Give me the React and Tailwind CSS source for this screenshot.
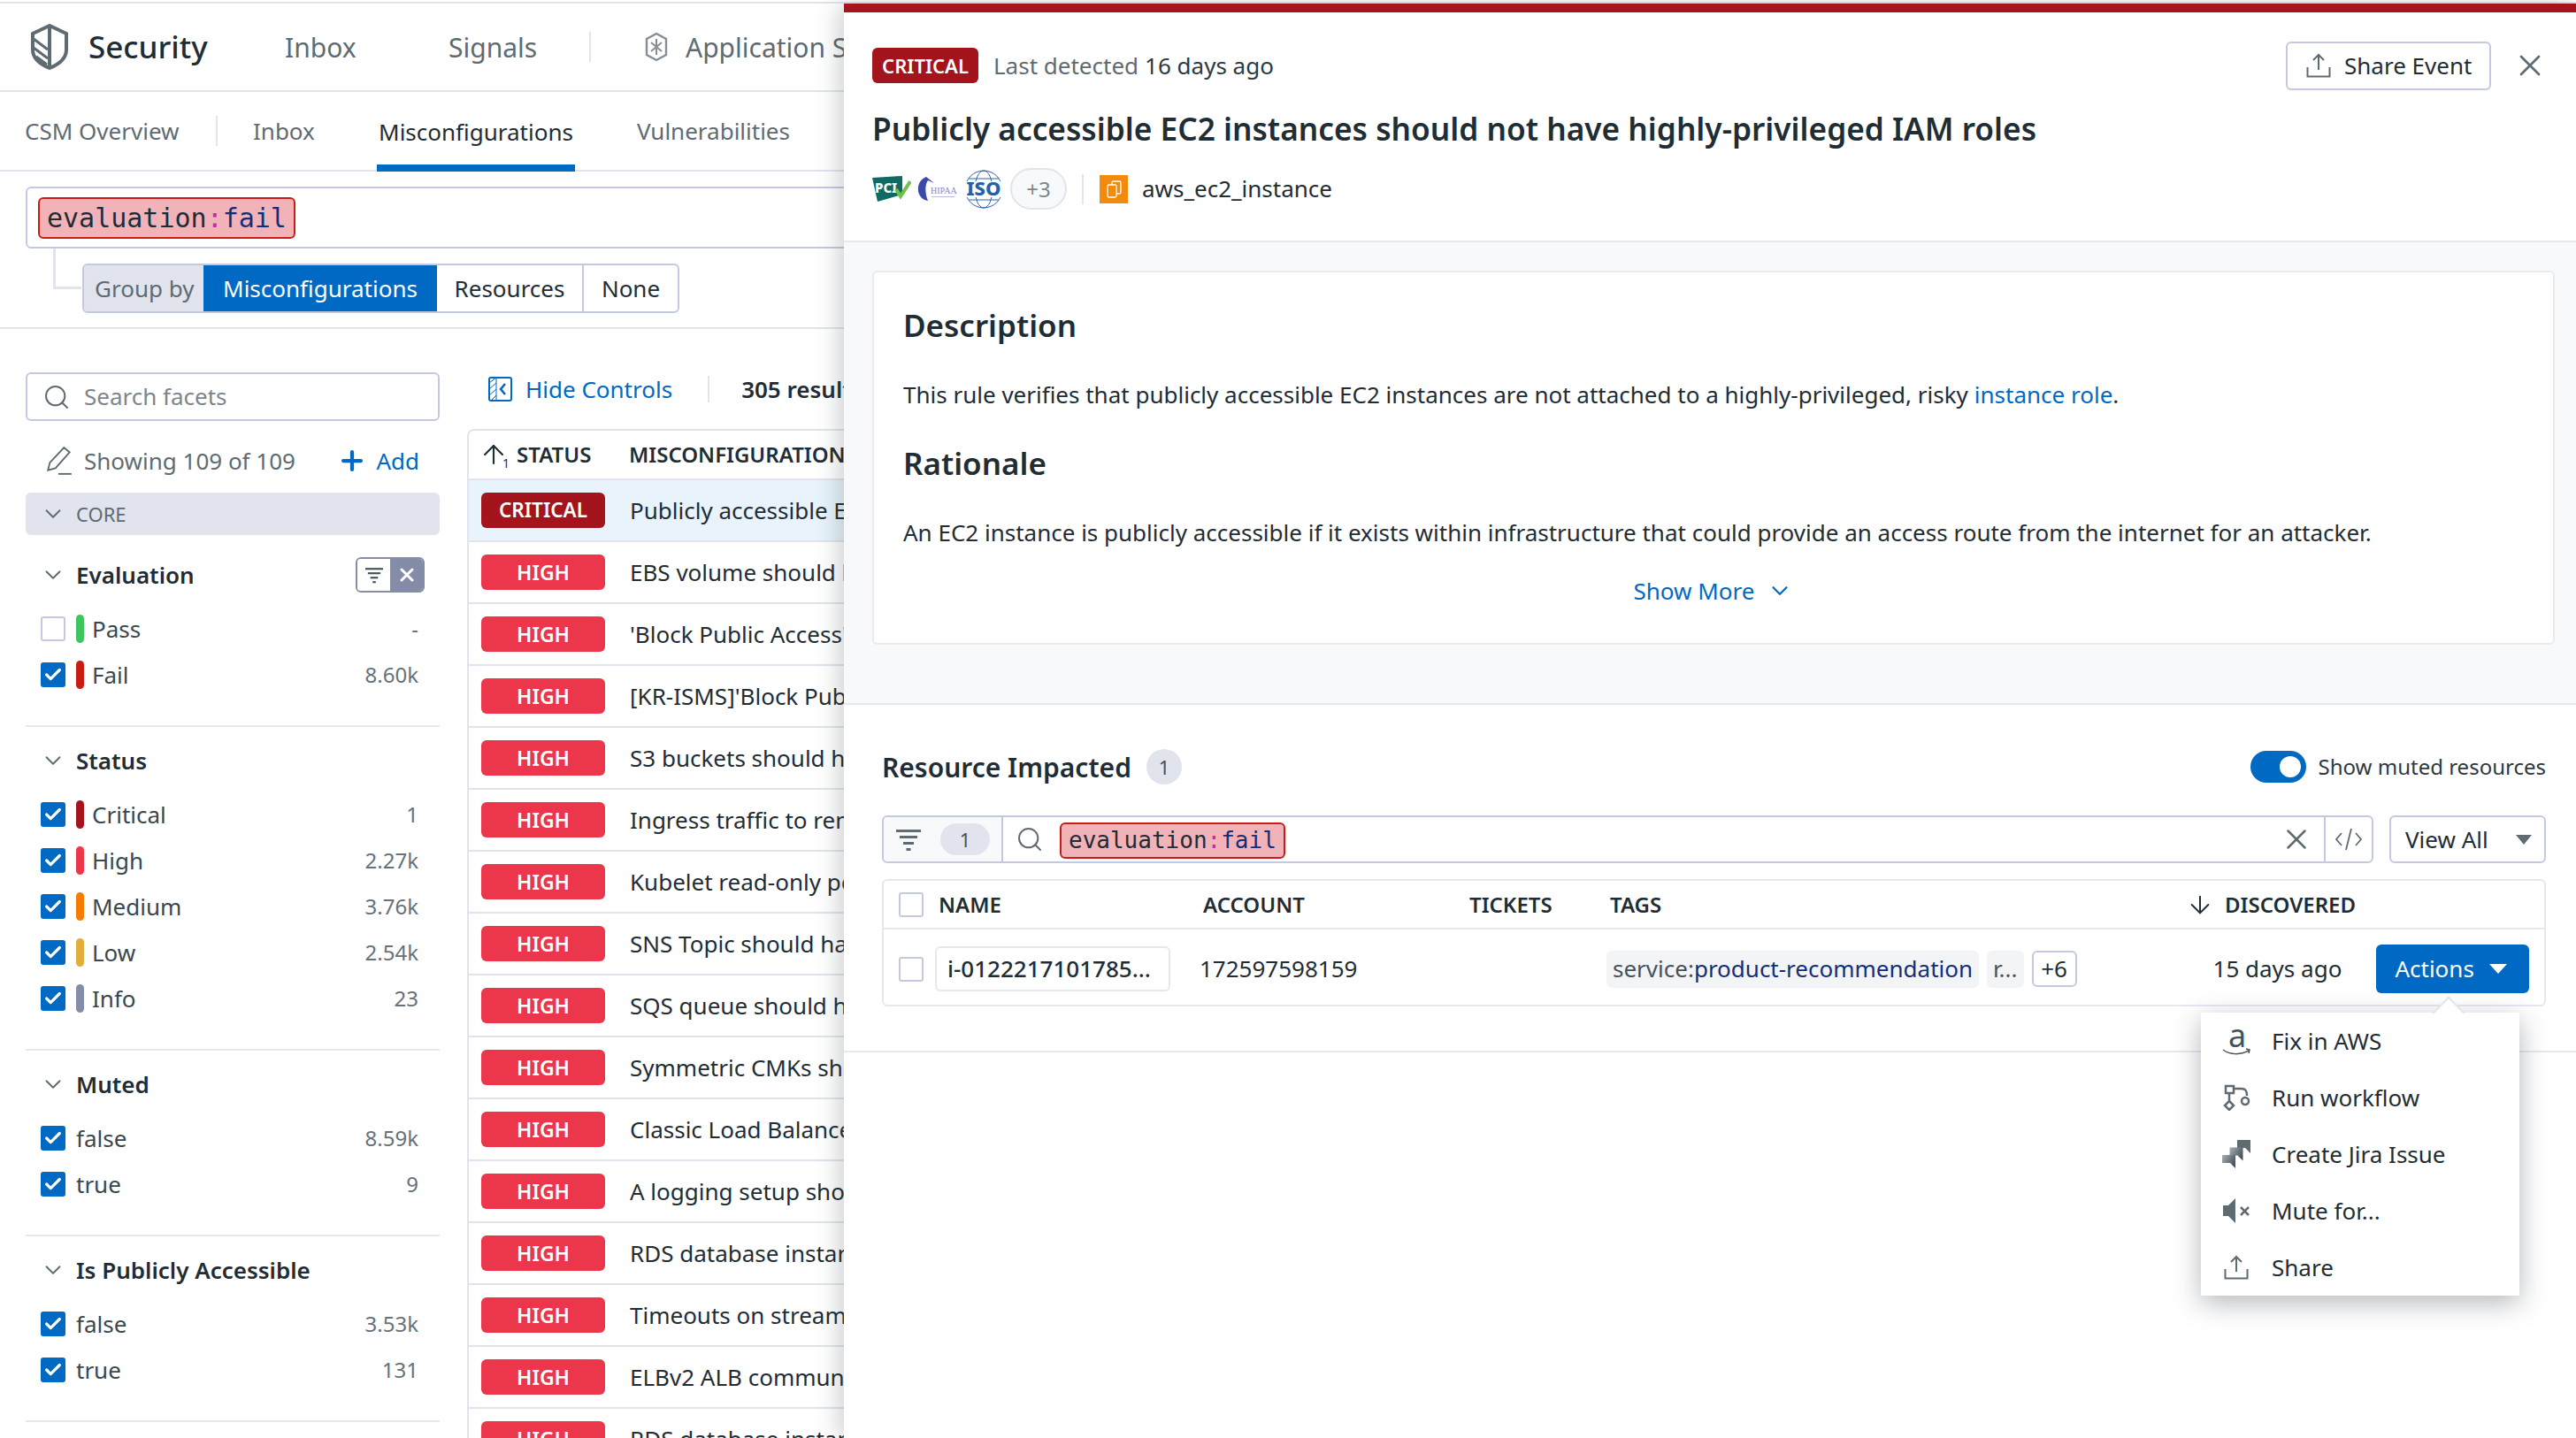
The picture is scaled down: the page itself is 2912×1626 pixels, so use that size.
import { Search, ChevronDown, Plus, X, Check, ArrowUp, ArrowDown } from "lucide-react";

const rows = [
  "EBS volume should be encrypted",
  "'Block Public Access' should be enabled",
  "[KR-ISMS]'Block Public Access' should be enabled",
  "S3 buckets should have logging enabled",
  "Ingress traffic to remote ports should be restricted",
  "Kubelet read-only port should be disabled",
  "SNS Topic should have encryption enabled",
  "SQS queue should have encryption enabled",
  "Symmetric CMKs should have rotation enabled",
  "Classic Load Balancer should use TLS",
  "A logging setup should be configured",
  "RDS database instance should be encrypted",
  "Timeouts on stream should be configured",
  "ELBv2 ALB communication should use HTTPS",
  "RDS database instance should not be public",
];

const facets = [
  {
    title: "Evaluation",
    first: true,
    clear: true,
    items: [
      { label: "Pass", count: "-", dot: "bg-[#3fc462]", off: true },
      { label: "Fail", count: "8.60k", dot: "bg-[#c91c12]" },
    ],
  },
  {
    title: "Status",
    items: [
      { label: "Critical", count: "1", dot: "bg-[#a3141c]" },
      { label: "High", count: "2.27k", dot: "bg-[#eb364b]" },
      { label: "Medium", count: "3.76k", dot: "bg-[#f57c00]" },
      { label: "Low", count: "2.54k", dot: "bg-[#e0ae3d]" },
      { label: "Info", count: "23", dot: "bg-[#858ca8]" },
    ],
  },
  {
    title: "Muted",
    items: [
      { label: "false", count: "8.59k" },
      { label: "true", count: "9" },
    ],
  },
  {
    title: "Is Publicly Accessible",
    items: [
      { label: "false", count: "3.53k" },
      { label: "true", count: "131" },
    ],
  },
];

// little filter funnel made of shrinking bars
const FilterBars = ({ className }) => (
  <svg viewBox="0 0 28 28" className={className} fill="currentColor">
    <rect x="0" y="3" width="28" height="3" />
    <rect x="4" y="10" width="20" height="3" />
    <rect x="8" y="17" width="12" height="3" />
    <rect x="11.5" y="24" width="5" height="3" />
  </svg>
);

const ShareIcon = ({ className }) => (
  <svg viewBox="0 0 28 28" className={className} fill="none" stroke="currentColor" strokeWidth="2">
    <path d="M14 19V2M8 8l6-6 6 6" />
    <path d="M1.5 16v10.5h25V16" />
  </svg>
);

const CheckBox = ({ off }) =>
  off ? (
    <span className="w-[28px] h-[28px] shrink-0 rounded-[3px] border-2 border-[#c3cadf] bg-white" />
  ) : (
    <span className="w-[28px] h-[28px] shrink-0 rounded-[3px] bg-[#0069c4] flex items-center justify-center">
      <Check size={22} strokeWidth={3.5} className="text-white" />
    </span>
  );

const FailPill = ({ small }) => (
  <span
    className={`inline-flex items-center rounded-[6px] border-2 border-[#c91c12] bg-[#f2b3b8] font-['DejaVu_Sans_Mono',monospace] ${
      small ? "h-[41px] px-[8px] text-[26px]" : "h-[47px] px-[8px] text-[30px]"
    }`}
  >
    <span className="text-[#1e2c33]">evaluation</span>
    <span className="text-[#c727b0]">:</span>
    <span className="text-[#12307a]">fail</span>
  </span>
);

const Facet = ({ facet }) => (
  <div className={`border-b-2 border-[#e6e8f0] pb-[31px] ${facet.first ? "pt-[25px]" : "pt-[18px]"}`}>
    <div className="h-[40px] flex items-center pl-[16px] pr-[17px]">
      <ChevronDown size={30} strokeWidth={1.5} className="text-[#5f6b73] mr-[11px]" />
      <span className="text-[26px] font-semibold text-[#1f2d35]">{facet.title}</span>
      {facet.clear && (
        <span className="ml-auto flex h-[40px] w-[78px] rounded-[6px] border-2 border-[#858ca8] overflow-hidden">
          <span className="w-[37px] flex items-center justify-center bg-white text-[#46525a]">
            <FilterBars className="w-[20px] h-[20px]" />
          </span>
          <span className="flex-1 flex items-center justify-center bg-[#858ca8]">
            <X size={24} strokeWidth={3} className="text-white" />
          </span>
        </span>
      )}
    </div>
    <div className="mt-[15px]">
      {facet.items.map((item) => (
        <div key={item.label} className="h-[52px] flex items-center pl-[17px] pr-[24px]">
          <CheckBox off={item.off} />
          {item.dot ? (
            <>
              <span className={`w-[9px] h-[32px] rounded-full ml-[12px] mr-[9px] ${item.dot}`} />
              <span className="text-[26px] text-[#3a474f]">{item.label}</span>
            </>
          ) : (
            <span className="text-[26px] text-[#3a474f] ml-[12px]">{item.label}</span>
          )}
          <span className="ml-auto text-[24px] text-[#67717a]">{item.count}</span>
        </div>
      ))}
    </div>
  </div>
);

const Sidebar = () => (
  <div className="w-[468px] ml-[29px] shrink-0">
    <div className="mt-[49px] h-[55px] rounded-[6px] border-2 border-[#c3cadf] flex items-center pl-[17px]">
      <Search size={32} strokeWidth={1.5} className="text-[#5f6b73]" />
      <span className="ml-[15px] text-[26px] text-[#7d868d]">Search facets</span>
    </div>
    <div className="mt-[25px] h-[40px] flex items-center pl-[22px] pr-[23px]">
      <svg viewBox="0 0 30 32" className="w-[34px] h-[34px] -ml-[1px] text-[#5f6b73]" fill="none" stroke="currentColor" strokeWidth="1.8">
        <path d="M3 26L5 18 20 2l6 5-15 17z" />
        <path d="M14 30h14" />
      </svg>
      <span className="ml-[11px] text-[26px] text-[#5f6b73]">Showing 109 of 109</span>
      <span className="ml-auto flex items-center text-[26px] text-[#0069c4]">
        <Plus size={34} strokeWidth={3} />
        <span className="ml-[10px]">Add</span>
      </span>
    </div>
    <div className="mt-[16px] h-[48px] rounded-[6px] bg-[#e1e4ec] flex items-center pl-[16px]">
      <ChevronDown size={30} strokeWidth={1.5} className="text-[#5f6b73] mr-[11px]" />
      <span className="text-[22px] text-[#5f6b73]">CORE</span>
    </div>
    {facets.map((facet) => (
      <Facet key={facet.title} facet={facet} />
    ))}
  </div>
);

const ResultsTable = () => (
  <div className="ml-[31px] flex-1 min-w-0 overflow-hidden">
    <div className="mt-[48px] h-[40px] flex items-center pl-[24px] whitespace-nowrap">
      <svg viewBox="0 0 27 28" className="w-[27px] h-[28px] text-[#0069c4]" fill="none" stroke="currentColor" strokeWidth="2">
        <rect x="1" y="1" width="25" height="26" rx="2" />
        <path d="M9 1v26M1 7l8-6M1 14l8-7M1 21l8-7M3 27l6-6" strokeWidth="1" />
        <path d="M19 8l-5 6 5 6" strokeWidth="2.5" />
      </svg>
      <span className="ml-[15px] text-[26px] text-[#0069c4]">Hide Controls</span>
      <span className="ml-[40px] w-[2px] h-[30px] bg-[#e1e4ec]" />
      <span className="ml-[36px] text-[26px] font-semibold text-[#1f2d35]">305 results found</span>
    </div>
    <div className="mt-[25px] border-l-2 border-t-2 border-[#e1e4ec] rounded-tl-[8px]">
      <div className="h-[56px] flex items-center border-b-2 border-[#e1e4ec] text-[24px] font-semibold text-[#1f2d35] whitespace-nowrap">
        <span className="relative w-[54px] pl-[14px] flex items-center">
          <ArrowUp size={34} strokeWidth={1.5} className="text-[#1f2d35] -ml-[3px]" />
          <span className="absolute left-[38px] top-[16px] text-[14px] font-normal">1</span>
        </span>
        <span className="w-[127px]">STATUS</span>
        <span>MISCONFIGURATION</span>
      </div>
      <div className="h-[70px] flex items-center pl-[14px] bg-[#e8f3fb] border-b-2 border-[#e1e4ec] whitespace-nowrap">
        <span className="w-[140px] h-[40px] rounded-[6px] bg-[#a3141c] text-white text-[22.5px] font-semibold flex items-center justify-center">
          CRITICAL
        </span>
        <span className="ml-[28px] text-[26px] text-[#1f2d35]">Publicly accessible EC2 instances</span>
      </div>
      {rows.map((title, i) => (
        <div key={i} className="h-[70px] flex items-center pl-[14px] border-b-2 border-[#e1e4ec] whitespace-nowrap">
          <span className="w-[140px] h-[40px] rounded-[6px] bg-[#eb364b] text-white text-[23px] font-semibold flex items-center justify-center">
            HIGH
          </span>
          <span className="ml-[28px] text-[26px] text-[#1f2d35]">{title}</span>
        </div>
      ))}
    </div>
  </div>
);

const ActionsMenu = () => (
  <div className="absolute left-[1534px] top-[1131px] w-[360px] h-[320px] bg-white shadow-[0_8px_28px_rgba(40,50,60,0.35)] flex flex-col text-[26px] text-[#1f2d35]">
    <span className="absolute -top-[13px] left-[267px] w-[26px] h-[26px] rotate-45 bg-white border-l-2 border-t-2 border-[#e1e4ec]" />
    <div className="relative h-[64px] flex items-center pl-[24px]">
      <span className="relative w-[32px] h-[32px] shrink-0 text-[#46525a]">
        <span className="absolute left-[7px] -top-[10px] text-[36px] leading-[40px]">a</span>
        <svg viewBox="0 0 32 10" className="absolute left-0 top-[24px] w-[32px] h-[10px]" fill="none" stroke="currentColor" strokeWidth="1.5">
          <path d="M1 2c8 6 20 6 29 1M27 1l4 1-1 4" />
        </svg>
      </span>
      <span className="ml-[24px]">Fix in AWS</span>
    </div>
    <div className="relative h-[64px] flex items-center pl-[24px]">
      <svg viewBox="0 0 32 30" className="w-[32px] h-[30px] text-[#5f6b73]" fill="none" stroke="currentColor" strokeWidth="2.5">
        <rect x="4" y="2" width="9" height="8" />
        <path d="M13 5h9c5 0 6 3 6 8M8 10v9" />
        <circle cx="26" cy="19" r="4" />
        <path d="M8 19l5 5-5 5-5-5z" />
      </svg>
      <span className="ml-[24px]">Run workflow</span>
    </div>
    <div className="relative h-[64px] flex items-center pl-[24px]">
      <svg viewBox="0 0 32 32" className="w-[32px] h-[32px]">
        <defs>
          <linearGradient id="jiraFade" x1="0" y1="0" x2="1" y2="0.6">
            <stop offset="0" stopColor="#aab0b5" />
            <stop offset="1" stopColor="#46525a" />
          </linearGradient>
        </defs>
        <path d="M17 0h15v15l-6-6h-9z" fill="#5f6b73" />
        <path d="M8.5 8.5h15v15l-6-6h-9z" fill="url(#jiraFade)" />
        <path d="M0 17h15v15l-6-6H0z" fill="url(#jiraFade)" />
      </svg>
      <span className="ml-[24px]">Create Jira Issue</span>
    </div>
    <div className="relative h-[64px] flex items-center pl-[24px]">
      <svg viewBox="0 0 32 30" className="w-[32px] h-[30px] text-[#5f6b73]" fill="currentColor">
        <path d="M1 9h6l8-8v28l-8-8H1z" />
        <path d="M21 11l9 9M30 11l-9 9" fill="none" stroke="currentColor" strokeWidth="2.5" />
      </svg>
      <span className="ml-[24px]">Mute for...</span>
    </div>
    <div className="relative h-[64px] flex items-center pl-[24px]">
      <ShareIcon className="w-[28px] h-[28px] ml-[2px] mr-[2px] text-[#5f6b73]" />
      <span className="ml-[24px]">Share</span>
    </div>
  </div>
);

const EventPanel = () => (
  <div className="absolute left-[954px] top-[4px] right-0 bottom-0 bg-white border-t-[10px] border-[#a3141c] shadow-[-6px_0_24px_rgba(60,70,80,0.25)]">
    <div className="px-[32px] pt-[40px] pb-[35px] border-b-2 border-[#e6e8f0]">
      <div className="h-[40px] flex items-center">
        <span className="w-[120px] h-[40px] rounded-[6px] bg-[#a3141c] text-white text-[22px] font-semibold flex items-center justify-center">
          CRITICAL
        </span>
        <span className="ml-[17px] text-[26px] text-[#5f6b73]">Last detected</span>
        <span className="ml-[7px] text-[26px] text-[#2d3a42]">16 days ago</span>
        <span className="ml-auto -my-[8px] h-[55px] w-[232px] rounded-[6px] border-2 border-[#c3cadf] flex items-center pl-[21px] text-[26px] text-[#1f2d35]">
          <ShareIcon className="w-[28px] h-[28px] text-[#5f6b73]" />
          <span className="ml-[15px]">Share Event</span>
        </span>
        <span className="ml-[30px] mr-[6px] w-[28px] flex justify-center">
          <X size={40} strokeWidth={1.6} className="text-[#5f6b73] shrink-0" />
        </span>
      </div>
      <div className="mt-[26px] h-[50px] flex items-center text-[35.25px] font-semibold text-[#1f2d35] whitespace-nowrap">
        Publicly accessible EC2 instances should not have highly-privileged IAM roles
      </div>
      <div className="mt-[20px] h-[47px] flex items-center">
        <svg viewBox="0 0 44 30" className="w-[44px] h-[30px]">
          <path d="M0 2l34-2v21L6 29z" fill="#0e6a63" />
          <text x="3" y="19" fontSize="15" fontWeight="800" fill="#fff" fontFamily="Noto Sans">PCI</text>
          <path d="M27 15l5 8 11-17" fill="none" stroke="#6cc24a" strokeWidth="4" />
        </svg>
        <svg viewBox="0 0 45 30" className="ml-[7px] w-[45px] h-[30px]">
          <path d="M10 1C3 4 0 10 1 17c1 6 5 10 11 11-3-7-4-18 0-23l7 3z" fill="#3b4aa8" />
          <text x="15" y="20" fontSize="10" fill="#7f89c0" fontFamily="Liberation Serif">HIPAA</text>
          <rect x="16" y="23" width="26" height="1" fill="#b8c0dc" />
        </svg>
        <svg viewBox="0 0 44 44" className="ml-[8px] w-[44px] h-[44px]">
          <circle cx="22" cy="22" r="21" fill="none" stroke="#2f64ad" strokeWidth="1" />
          <ellipse cx="22" cy="22" rx="10" ry="21" fill="none" stroke="#2f64ad" strokeWidth="1" />
          <path d="M5 10h34M5 34h34" stroke="#2f64ad" strokeWidth="1" />
          <rect x="0" y="13" width="44" height="18" fill="#fff" />
          <text x="22" y="29" fontSize="22" fontWeight="800" fill="#2560ab" textAnchor="middle" fontFamily="Noto Sans">ISO</text>
        </svg>
        <span className="ml-[8px] w-[64px] h-[47px] rounded-full bg-[#f8f9fb] border-2 border-[#e1e4ec] flex items-center justify-center text-[24px] text-[#7d868d]">
          +3
        </span>
        <span className="ml-[17px] w-[2px] h-[34px] bg-[#e1e4ec]" />
        <span className="ml-[18px] w-[32px] h-[32px] bg-[#f28a0c] flex items-center justify-center">
          <svg viewBox="0 0 22 22" className="w-[22px] h-[22px]" fill="#f28a0c" stroke="#fff" strokeWidth="1.3">
            <rect x="9" y="2" width="10" height="14" rx="1.5" />
            <rect x="4" y="6" width="10" height="14" rx="1.5" />
          </svg>
        </span>
        <span className="ml-[16px] text-[26px] text-[#1f2d35]">aws_ec2_instance</span>
      </div>
    </div>

    <div className="bg-[#f8f9fb] pl-[32px] pr-[24px] pt-[32px] pb-[66px] border-b-2 border-[#e6e8f0]">
      <div className="h-[423px] rounded-[6px] bg-white border-2 border-[#e9ebf1] px-[33px] pt-[38px] whitespace-nowrap">
        <div className="h-[44px] flex items-center text-[35px] font-semibold text-[#1f2d35]">Description</div>
        <div className="mt-[38px] h-[36px] flex items-center text-[26px] text-[#1f2d35]">
          This rule verifies that publicly accessible EC2 instances are not attached to a highly-privileged, risky
          <span className="ml-[7px] text-[#0069c4]">instance role</span>.
        </div>
        <div className="mt-[38px] h-[44px] flex items-center text-[35px] font-semibold text-[#1f2d35]">Rationale</div>
        <div className="mt-[38px] h-[36px] flex items-center text-[26px] text-[#1f2d35]">
          An EC2 instance is publicly accessible if it exists within infrastructure that could provide an access route from the internet for an attacker.
        </div>
        <div className="mt-[30px] h-[36px] flex items-center justify-center text-[26px] text-[#0069c4]">
          Show More
          <ChevronDown size={30} strokeWidth={1.8} className="ml-[14px]" />
        </div>
      </div>
    </div>

    <div className="pl-[43px] pr-[34px] pt-[50px] pb-[50px] border-b-2 border-[#e6e8f0]">
      <div className="h-[40px] flex items-center">
        <span className="text-[30px] font-semibold text-[#1f2d35]">Resource Impacted</span>
        <span className="ml-[17px] w-[40px] h-[40px] rounded-full bg-[#e1e4ec] flex items-center justify-center text-[22px] text-[#46525a]">1</span>
        <span className="ml-auto w-[63px] h-[36px] rounded-full bg-[#0069c4] relative">
          <span className="absolute right-[6px] top-[6px] w-[24px] h-[24px] rounded-full bg-white" />
        </span>
        <span className="ml-[14px] text-[24px] text-[#2d3a42]">Show muted resources</span>
      </div>

      <div className="mt-[35px] flex gap-[18px]">
        <div className="flex-1 h-[54px] rounded-[6px] border-2 border-[#c3cadf] flex items-center">
          <span className="h-full w-[135px] bg-[#f8f9fb] rounded-l-[6px] border-r-2 border-[#c3cadf] flex items-center pl-[14px] shrink-0">
            <FilterBars className="w-[28px] h-[28px] text-[#5f6b73]" />
            <span className="ml-[22px] w-[56px] h-[36px] rounded-full bg-[#e1e4ec] flex items-center justify-center text-[22px] text-[#46525a]">1</span>
          </span>
          <Search size={32} strokeWidth={1.5} className="ml-[14px] text-[#5f6b73]" />
          <span className="ml-[18px] flex mt-[2px]">
            <FailPill small />
          </span>
          <X size={38} strokeWidth={1.6} className="ml-auto text-[#5f6b73]" />
          <span className="ml-[12px] h-full w-[54px] border-l-2 border-[#c3cadf] flex items-center justify-center text-[#5f6b73]">
            <svg viewBox="0 0 32 26" className="w-[32px] h-[26px]" fill="none" stroke="currentColor" strokeWidth="1.8">
              <path d="M8 6l-6 7 6 7M24 6l6 7-6 7M19 1l-6 24" />
            </svg>
          </span>
        </div>
        <div className="w-[177px] h-[54px] rounded-[6px] border-2 border-[#c3cadf] flex items-center pl-[16px] pr-[14px] text-[26px] text-[#1f2d35]">
          View All
          <span className="ml-auto w-0 h-0 border-l-[9px] border-r-[9px] border-t-[11px] border-l-transparent border-r-transparent border-t-[#5f6b73]" />
        </div>
      </div>

      <div className="mt-[18px] h-[144px] rounded-[6px] border-2 border-[#e6e8f0]">
        <div className="h-[55px] flex items-center border-b-2 border-[#e6e8f0] text-[24px] font-semibold text-[#1f2d35] whitespace-nowrap pl-[17px]">
          <span className="w-[28px] h-[28px] rounded-[3px] border-2 border-[#c3cadf] shrink-0" />
          <span className="ml-[17px] w-[299px]">NAME</span>
          <span className="w-[301px]">ACCOUNT</span>
          <span className="w-[159px]">TICKETS</span>
          <span className="w-[651px]">TAGS</span>
          <ArrowDown size={32} strokeWidth={1.5} className="shrink-0" />
          <span className="ml-[12px]">DISCOVERED</span>
        </div>
        <div className="h-[85px] pt-[4px] flex items-center text-[26px] text-[#1f2d35] whitespace-nowrap pl-[17px]">
          <span className="w-[28px] h-[28px] rounded-[3px] border-2 border-[#c3cadf] shrink-0" />
          <span className="ml-[13px] w-[266px] h-[51px] rounded-[6px] border-2 border-[#e6e8f0] flex items-center pl-[12px] font-medium">
            i-0122217101785...
          </span>
          <span className="ml-[33px] w-[460px]">172597598159</span>
          <span className="h-[42px] px-[7px] rounded-[6px] bg-[#f3f4f6] flex items-center text-[26px]">
            <span className="text-[#46525a]">service:</span>
            <span className="text-[#12307a]">product-recommendation</span>
          </span>
          <span className="ml-[9px] h-[42px] px-[7px] rounded-[6px] bg-[#f3f4f6] flex items-center text-[#46525a]">r...</span>
          <span className="ml-[9px] w-[51px] h-[41px] rounded-[6px] border-2 border-[#c3cadf] flex items-center justify-center">+6</span>
          <span className="ml-[154px]">15 days ago</span>
          <span className="ml-[39px] w-[173px] h-[55px] rounded-[6px] bg-[#0069c4] text-white flex items-center pl-[21px]">
            Actions
            <span className="ml-[17px] w-0 h-0 border-l-[10px] border-r-[10px] border-t-[11px] border-l-transparent border-r-transparent border-t-white" />
          </span>
        </div>
      </div>
    </div>

    <ActionsMenu />
  </div>
);

export default function App() {
  return (
    <div className="relative w-[2912px] h-[1626px] overflow-hidden bg-white font-['Noto_Sans',sans-serif] flex flex-col">
      <div className="h-[4px] shrink-0 border-b-2 border-[#e1e4ec]" />
      <div className="h-[100px] shrink-0 border-b-2 border-[#e1e4ec] flex items-center pl-[35px] whitespace-nowrap">
        <svg viewBox="0 0 42 54" className="w-[42px] h-[54px] text-[#5f6b73]" fill="none" stroke="currentColor" strokeWidth="4">
          <path d="M21 3L2 12v18c0 10 9 17 19 21 10-4 19-11 19-21V12z" />
          <path d="M21 3v48" />
          <path d="M3 18l16 12M3 28l16 12M6 38l12 9" strokeWidth="3" />
        </svg>
        <span className="ml-[23px] w-[222px] text-[35px] font-medium text-[#1f2d35]">Security</span>
        <span className="w-[185px] text-[30px] text-[#5f6b73]">Inbox</span>
        <span className="w-[159px] text-[30px] text-[#5f6b73]">Signals</span>
        <span className="w-[2px] h-[34px] bg-[#e1e4ec]" />
        <svg viewBox="0 0 28 34" className="ml-[60px] w-[28px] h-[34px] text-[#858e95]" fill="none" stroke="currentColor" strokeWidth="2.4">
          <path d="M14 2l11 6v18l-11 6-11-6V8z" />
          <path d="M14 8v18M8 12l6 5 6-5M8 22l6-5 6 5" strokeWidth="2" />
        </svg>
        <span className="ml-[19px] text-[30px] text-[#5f6b73]">Application Security</span>
      </div>
      <div className="h-[90px] shrink-0 border-b-2 border-[#e1e4ec] flex items-stretch pl-[28px] whitespace-nowrap text-[26px] text-[#5f6b73]">
        <span className="flex items-center w-[216px]">CSM Overview</span>
        <span className="self-center w-[2px] h-[34px] bg-[#e1e4ec]" />
        <span className="flex items-center ml-[40px] w-[140px]">Inbox</span>
        <span className="flex items-center w-[224px] justify-center text-[#1f2d35] border-b-[8px] border-[#0069c4] pt-[8px] -mb-[2px]">
          Misconfigurations
        </span>
        <span className="flex items-center ml-[70px]">Vulnerabilities</span>
      </div>
      <div className="h-[178px] shrink-0 border-b-2 border-[#e1e4ec] relative pl-[29px] pt-[17px]">
        <div className="h-[70px] w-[1000px] rounded-[6px] border-2 border-[#c3cadf] flex items-center pl-[12px]">
          <FailPill />
        </div>
        <span className="absolute left-[60px] top-[87px] w-[32px] h-[46px] border-l-[3px] border-b-[3px] border-[#e1e4ec]" />
        <div className="ml-[64px] mt-[17px] w-[675px] h-[56px] rounded-[6px] border-2 border-[#c3cadf] flex items-stretch text-[26px] text-[#1f2d35] overflow-hidden">
          <span className="w-[135px] bg-[#e1e4ec] text-[#5f6b73] flex items-center pl-[12px]">Group by</span>
          <span className="w-[264px] bg-[#0069c4] text-white flex items-center justify-center">Misconfigurations</span>
          <span className="w-[166px] border-r-2 border-[#c3cadf] flex items-center justify-center">Resources</span>
          <span className="flex-1 flex items-center justify-center">None</span>
        </div>
      </div>
      <div className="flex flex-1 min-h-0 overflow-hidden">
        <Sidebar />
        <ResultsTable />
      </div>
      <EventPanel />
    </div>
  );
}
